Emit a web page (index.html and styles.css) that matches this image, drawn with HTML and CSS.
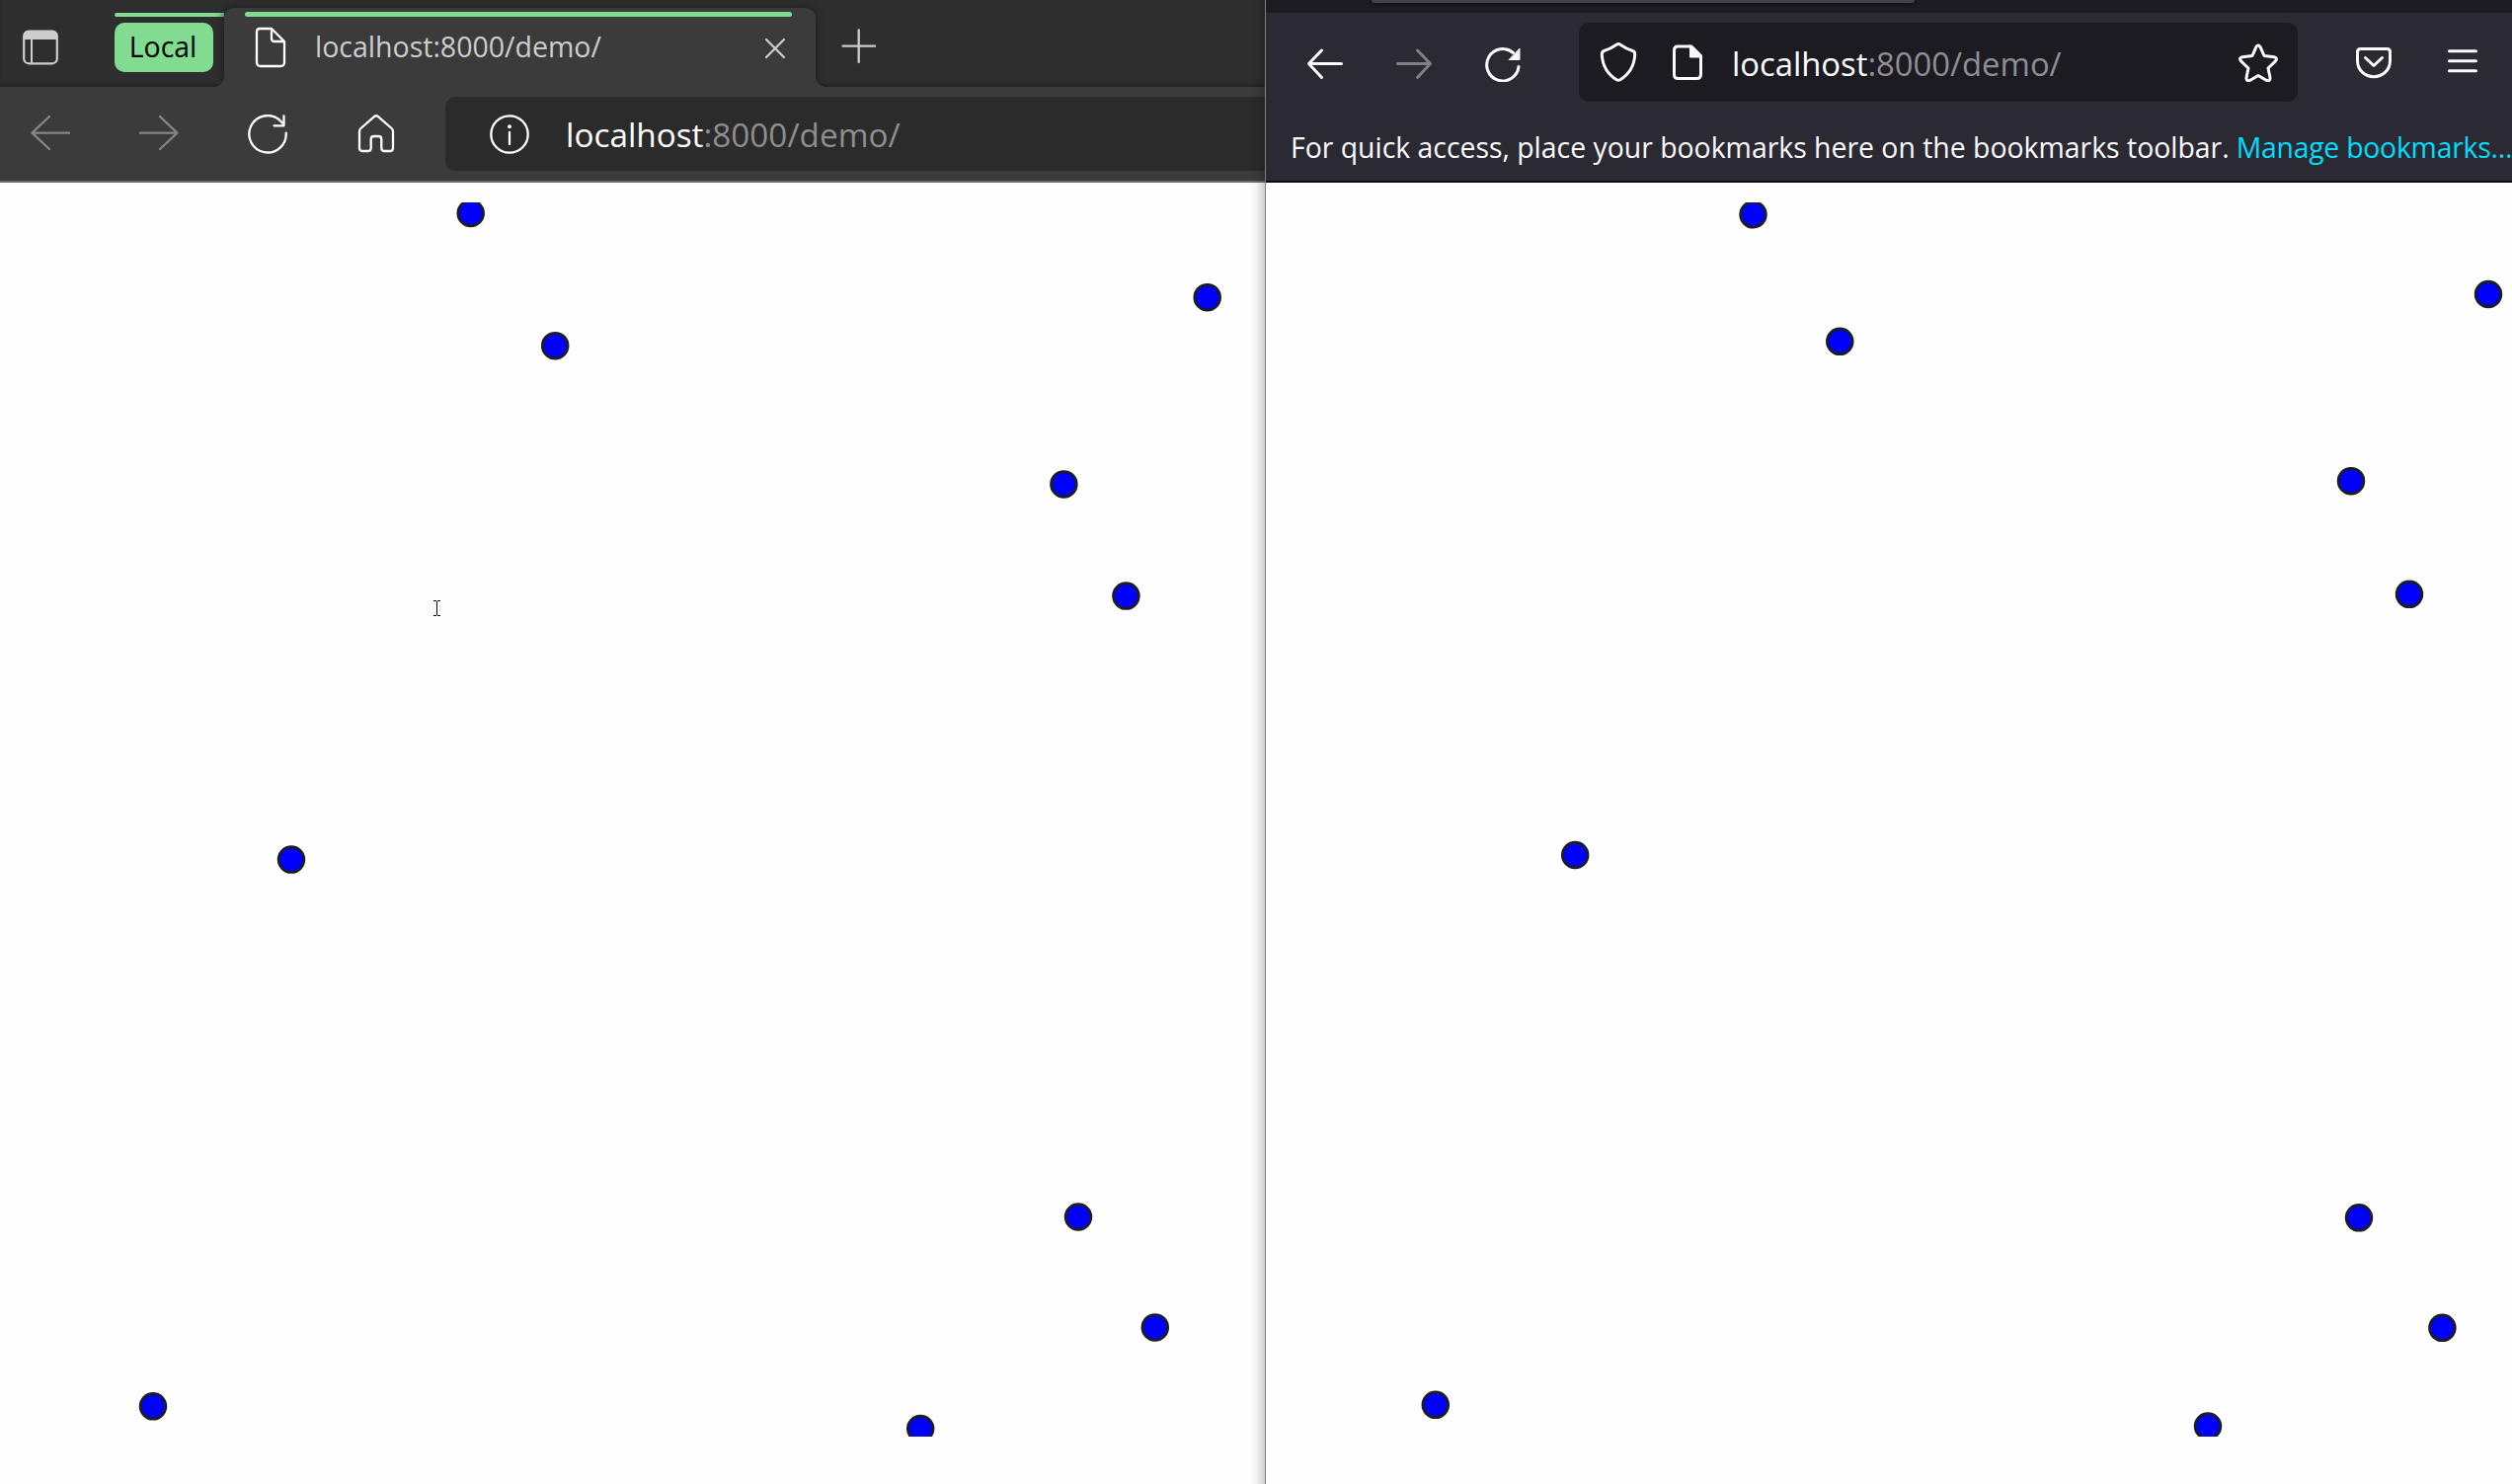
FILE: index.html
```html
<!DOCTYPE html>
<html lang="en">
<head>
<meta charset="utf-8">
<title>localhost:8000/demo/</title>
<link rel="stylesheet" href="styles.css">
</head>
<body>
<div class="screen">
  <section class="edge">
    <div class="edge-strip">
      <svg class="panel-icon" width="36" height="36" viewBox="0 0 36 36"><rect x="1.2" y="1.5" width="33.6" height="32.8" rx="5" fill="none" stroke="#cdcdcd" stroke-width="2.2"/><path d="M1 10V6Q1 1 6 1H30Q35 1 35 6V10ZM8 10h2v24h-2z" fill="#cdcdcd"/></svg>
      <div class="group"><span class="group-line"></span><span class="group-chip">Local</span></div>
      <div class="edge-tab">
        <span class="tab-line"></span>
        <div class="tab-row">
          <svg width="32" height="42" viewBox="0 0 32 42" fill="none" stroke="#fff" stroke-width="2.3" stroke-linejoin="round"><path d="M5 2H17L30 15V36Q30 40 26 40H6Q2 40 2 36V5Q2 2 5 2ZM17 2V12Q17 15 20 15H30"/></svg>
          <span class="tab-title">localhost:8000/demo/</span>
          <svg class="close" width="22" height="22" viewBox="0 0 22 22" stroke="#cdcdcd" stroke-width="2.2" stroke-linecap="round"><path d="M2 2L20 20M20 2L2 20"/></svg>
        </div>
      </div>
      <svg class="plus" width="36" height="36" viewBox="0 0 36 36" stroke="#cdcdcd" stroke-width="2.3" stroke-linecap="round"><path d="M1.5 17.7H34M17.7 1.5V34"/></svg>
    </div>
    <div class="edge-bar">
      <div class="edge-nav">
        <svg viewBox="0 0 40 40" stroke="#858585"><path d="M39 18.7H1.5M19 2L1.5 18.7L19 35"/></svg>
        <svg viewBox="0 0 40 40" stroke="#858585"><path d="M1 18.7H38.5M21 2L38.5 18.7L21 35"/></svg>
        <svg viewBox="0 0 40 40" stroke="#fff"><path d="M38.7 18.7A18.7 18.7 0 1 1 31.5 5L36.5 10M36.5 1.5V11.3H26.5"/></svg>
        <svg viewBox="0 0 40 40" stroke="#fff"><path d="M18 2.2Q20 .3 22 2.2L35.6 14Q37 15.2 37 17V34Q37 37 34 37H28.5Q25.3 37 25.3 34V25Q25.3 22 22.3 22H17.7Q14.7 22 14.7 25V34Q14.7 37 11.5 37H6Q3 37 3 34V17Q3 15.2 4.4 14Z"/></svg>
      </div>
      <div class="edge-address">
        <svg width="40" height="40" viewBox="0 0 40 40" fill="none" stroke="#fff" stroke-width="2.3" stroke-linecap="round"><circle cx="20" cy="20" r="18.7"/><path d="M20 18V30"/><circle cx="20" cy="12.3" r="2" fill="#fff" stroke="none"/></svg>
        <span class="edge-url"><b>localhost</b>:8000/demo/</span>
      </div>
    </div>
    <svg class="page" width="1281" height="1318" viewBox="0 185 1281 1318">
      <defs><clipPath id="left"><rect x="20" y="205" width="1250" height="1250"/></clipPath></defs>
      <g class="dots" clip-path="url(#left)">
        <circle cx="476.7" cy="216" r="12.8"/><circle cx="562.2" cy="350.2" r="12.8"/><circle cx="1222.7" cy="301.2" r="12.8"/><circle cx="1077.4" cy="490.4" r="12.8"/><circle cx="1140.4" cy="603.6" r="12.8"/><circle cx="295" cy="870.6" r="12.8"/><circle cx="1092" cy="1232.5" r="12.8"/><circle cx="1169.8" cy="1344.4" r="12.8"/><circle cx="155" cy="1424.3" r="12.8"/><circle cx="932.2" cy="1447" r="12.8"/>
      </g>
      <path class="caret" d="M439 608.5H442M443 608.5H446M442.5 609V623M439 623.5H442M443 623.5H446"/>
    </svg>
    <div class="window-shadow"></div>
  </section>
  <section class="firefox">
    <div class="fox-strip"><span class="fox-tab"></span></div>
    <div class="fox-nav">
      <div class="fox-buttons">
        <svg viewBox="0 0 40 40" stroke="#fbfbfe"><path d="M36.5 21.5H4M16.5 8L3.5 21.5L16.5 35.5"/></svg>
        <svg viewBox="0 0 40 40" stroke="#807f86"><path d="M3.5 21.5H36M23.5 8L36.5 21.5L23.5 35.5"/></svg>
        <svg viewBox="0 0 40 40" stroke="#fbfbfe"><path d="M36 24.5A16.2 16.2 0 1 1 30.5 10.5"/><path d="M37 6.5V17.5H26.5Z" fill="#fbfbfe" stroke-width="1"/></svg>
      </div>
      <div class="fox-address">
        <svg viewBox="0 0 40 40" stroke="#fbfbfe"><path d="M18.5 2Q20 1 21.5 2Q28 6.5 34.5 8.5Q36.8 9.3 36.7 12Q36 29 21.8 37.8Q20 38.8 18.2 37.8Q4 29 3.3 12Q3.2 9.3 5.5 8.5Q12 6.5 18.5 2Z"/></svg>
        <svg viewBox="0 0 40 40" stroke="#fbfbfe"><path d="M10 4H24L33.5 13.5V32Q33.5 36.5 29.5 36.5H10.5Q6.5 36.5 6.5 32.5V8Q6.5 4 10 4Z"/><path d="M22.5 3V15H34Z" fill="#fbfbfe" stroke-width="1"/></svg>
        <span class="fox-url"><b>localhost</b>:8000/demo/</span>
        <svg class="star" viewBox="0 0 40 40" stroke="#fbfbfe"><path d="M18 4.3Q20 1.5 22 4.3L26 13.5L36 14.7Q40 15.8 37.5 18.8L30 26L32 35.5Q32.2 39.5 28.5 38.5L20 33.5L11.5 38.5Q7.8 39.5 8 35.5L10 26L2.5 18.8Q0 15.8 4 14.7L14 13.5Z"/></svg>
      </div>
      <svg class="pocket" viewBox="0 0 40 40" stroke="#fbfbfe"><path d="M6.5 6.5H33.5Q36.5 6.5 36.5 9.5V18.5C36.5 28 29 34.7 20 34.7S3.5 28 3.5 18.5V9.5Q3.5 6.5 6.5 6.5ZM11.5 15.5L20 23.5L28.5 15.5"/></svg>
      <svg class="menu" viewBox="0 0 40 40" stroke="#fbfbfe"><path d="M6.5 8.8H33.5M6.5 18.8H33.5M6.5 28.8H33.5"/></svg>
    </div>
    <div class="bookmarks"><span class="hint">For quick access, place your bookmarks here on the bookmarks toolbar.</span><a class="manage">Manage bookmarks…</a></div>
    <svg class="page" width="1262" height="1318" viewBox="1282 185 1262 1318">
      <defs><clipPath id="right"><rect x="1302" y="205" width="1242" height="1250"/></clipPath></defs>
      <g class="dots" clip-path="url(#right)">
        <circle cx="1775.5" cy="217.3" r="12.8"/><circle cx="1863.3" cy="345.8" r="12.8"/><circle cx="2520" cy="298" r="12.8"/><circle cx="2381" cy="487.2" r="12.8"/><circle cx="2440" cy="601.8" r="12.8"/><circle cx="1595.2" cy="866" r="12.8"/><circle cx="2389" cy="1233.3" r="12.8"/><circle cx="2473.4" cy="1344.8" r="12.8"/><circle cx="1453.8" cy="1422.8" r="12.8"/><circle cx="2236" cy="1444.5" r="12.8"/>
      </g>
    </svg>
  </section>
</div>
</body>
</html>
```
FILE: styles.css
```css
* { box-sizing: border-box; }
body { margin: 0; background: #fff; font-family: "Open Sans", "Noto Sans", sans-serif; overflow: hidden; }
b { font-weight: 400; }
svg { display: block; flex: none; }
span, a { white-space: nowrap; }
.screen { display: flex; width: 2544px; height: 1503px; overflow: hidden; }
.page { background: #fefefe; }
.dots { fill: #00f; stroke: #1c1c26; stroke-width: 2.9; }
.caret { fill: none; stroke: #000; stroke-width: 1; }

.edge { position: relative; width: 1282px; flex: none; border-right: 1px solid #808080; background: #fff; overflow: hidden; }
.edge-strip { display: flex; align-items: flex-start; height: 88px; background: #2e2e2e; box-shadow: inset 0 -5px 5px -3px #222; }
.panel-icon { margin: 30px 0 0 23px; }
.group { display: flex; flex-direction: column; width: 111px; margin: 13px 0 0 57px; }
.group-line { height: 4px; border-radius: 2px 0 0 2px; background: #81dc92; }
.group-chip { display: flex; align-items: center; justify-content: center; width: 100px; height: 50px; margin-top: 6px; padding: 0 2px 3px 0; border-radius: 10px; background: #81dc92; color: #000; font-size: 28.4px; }
.edge-tab { position: relative; width: 599px; height: 80px; margin-top: 8px; padding: 4px 24px 0 21px; border-radius: 10px 10px 0 0; background: #3b3b3b; box-shadow: 0 0 10px #1c1c1c; clip-path: inset(-8px -12px 0 -12px); }
.edge-tab::before, .edge-tab::after { content: ""; position: absolute; bottom: 0; width: 10px; height: 10px; }
.edge-tab::before { left: -10px; background: radial-gradient(circle at 0 0, transparent 9.5px, #3b3b3b 10px); }
.edge-tab::after { right: -10px; background: radial-gradient(circle at 100% 0, transparent 9.5px, #3b3b3b 10px); }
.tab-line { display: block; height: 5px; border-radius: 3px; background: #81dc92; }
.tab-row { display: flex; align-items: center; height: 62px; padding-left: 10px; }
.tab-title { margin-left: 29px; padding-bottom: 2px; font-size: 28.5px; color: #cdcdcd; }
.close { margin: 1px 6px 0 auto; }
.plus { margin: 29px 0 0 26px; }
.edge-bar { display: flex; align-items: center; height: 97px; border-bottom: 2px solid #6b6b6b; background: #3b3b3b; }
.edge-nav { display: flex; gap: 70px; padding-left: 31px; }
.edge-nav svg { width: 40px; height: 40px; fill: none; stroke-width: 2.3; stroke-linecap: round; stroke-linejoin: round; }
.edge-address { display: flex; align-items: center; width: 840px; height: 75px; margin-left: 50px; padding-left: 45px; border-radius: 10px; background: #2b2b2b; flex: none; }
.edge-url { margin-left: 37px; font-size: 33.3px; color: #8e8e8e; }
.edge-url b, .fox-url b { color: #fff; }
.window-shadow { position: absolute; top: 0; right: 0; bottom: 0; width: 16px; background: linear-gradient(to right, rgba(0,0,0,0), rgba(0,0,0,.05) 50%, rgba(0,0,0,.19)); }

.firefox { width: 1262px; flex: none; overflow: hidden; }
.fox-strip { height: 13px; background: #1c1b22; }
.fox-tab { display: block; width: 550px; height: 3px; margin-left: 107px; border-radius: 0 0 8px 8px; background: #42414d; box-shadow: 0 0 4px #000; }
.fox-nav { display: flex; align-items: center; height: 100px; padding-left: 40px; background: #2b2a33; }
.fox-nav svg { width: 40px; height: 40px; fill: none; stroke-width: 3; stroke-linecap: round; stroke-linejoin: round; }
.fox-buttons { display: flex; gap: 50px; }
.fox-address { display: flex; align-items: center; gap: 30px; width: 728px; height: 80px; margin-left: 57px; padding: 0 20px; border-radius: 10px; background: #1c1b22; }
.fox-url { margin-left: -5px; padding-top: 2px; font-size: 32.8px; color: #8f8f93; }
.fox-address .star { margin-left: auto; }
.pocket { margin-left: 57px; }
.menu { margin-left: 50px; }
.bookmarks { display: flex; align-items: center; height: 72px; padding: 2px 0 0 25px; border-bottom: 2px solid #0c0c0d; background: #2b2a33; color: #fbfbfe; font-size: 28.4px; overflow: hidden; }
.manage { margin-left: 7px; letter-spacing: -.25px; color: #00ddff; }
```
